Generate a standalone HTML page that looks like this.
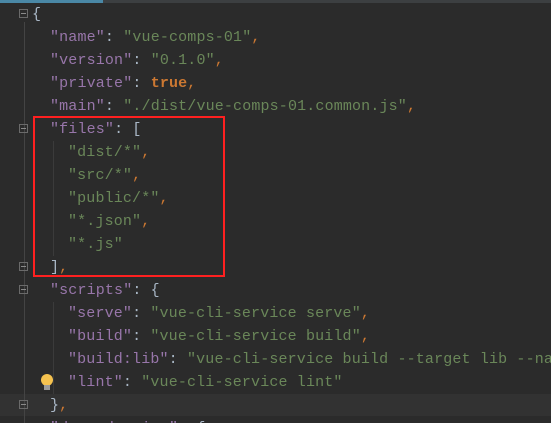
<!DOCTYPE html><html><head><style>
html,body{margin:0;width:551px;height:423px;overflow:hidden}
body{background:#2b2b2b;position:relative;font-family:"Liberation Mono",monospace;font-size:15px;}
#w{position:absolute;left:0;top:0;width:551px;height:423px;overflow:hidden}
.top{position:absolute;left:0;top:0;width:551px;height:3px;background:#3c3f41;}
.top i{position:absolute;left:0;top:0;width:103px;height:3px;background:#4a88a6;}
.hl{position:absolute;left:0;top:394px;width:551px;height:22px;background:#323232;}
.ln{position:absolute;left:0;height:23px;line-height:23px;white-space:pre;color:#a9b7c6;letter-spacing:0.15px}
.k{color:#9876aa}.s{color:#6a8759}.c{color:#cc7832}.b{color:#cc7832;font-weight:bold}
.box{position:absolute;left:33px;top:116px;width:188px;height:157px;border:2px solid #ff2020;}
.fold{position:absolute;left:19px;width:9px;height:9px;border:1px solid #6a6a6a;box-sizing:border-box}
.fold:after{content:"";position:absolute;left:1px;top:3px;width:5px;height:1px;background:#8a8a8a}
.vl{position:absolute;left:24px;width:1px;background:#444}
.gl{position:absolute;width:1px;background:#3b3b3b}
</style></head><body><div id="w">
<div class="top"><i></i></div>
<div class="hl"></div>
<div class="vl" style="top:22px;height:401px"></div>
<div class="fold" style="top:9px"></div>
<div class="fold" style="top:124px"></div>
<div class="fold" style="top:262px"></div>
<div class="fold" style="top:285px"></div>
<div class="fold" style="top:400px"></div>
<div class="gl" style="left:53px;top:141px;height:115px"></div>
<div class="gl" style="left:53px;top:302px;height:92px"></div>
<div class="ln" style="top:3px;left:32px">{</div>
<div class="ln" style="top:26px;left:50px"><span class="k">"name"</span>: <span class="s">"vue-comps-01"</span><span class="c">,</span></div>
<div class="ln" style="top:49px;left:50px"><span class="k">"version"</span>: <span class="s">"0.1.0"</span><span class="c">,</span></div>
<div class="ln" style="top:72px;left:50px"><span class="k">"private"</span>: <span class="b">true</span><span class="c">,</span></div>
<div class="ln" style="top:95px;left:50px"><span class="k">"main"</span>: <span class="s">"./dist/vue-comps-01.common.js"</span><span class="c">,</span></div>
<div class="ln" style="top:118px;left:50px"><span class="k">"files"</span>: [</div>
<div class="ln" style="top:141px;left:68px"><span class="s">"dist/*"</span><span class="c">,</span></div>
<div class="ln" style="top:164px;left:68px"><span class="s">"src/*"</span><span class="c">,</span></div>
<div class="ln" style="top:187px;left:68px"><span class="s">"public/*"</span><span class="c">,</span></div>
<div class="ln" style="top:210px;left:68px"><span class="s">"*.json"</span><span class="c">,</span></div>
<div class="ln" style="top:233px;left:68px"><span class="s">"*.js"</span></div>
<div class="ln" style="top:256px;left:50px">]<span class="c">,</span></div>
<div class="ln" style="top:279px;left:50px"><span class="k">"scripts"</span>: {</div>
<div class="ln" style="top:302px;left:68px"><span class="k">"serve"</span>: <span class="s">"vue-cli-service serve"</span><span class="c">,</span></div>
<div class="ln" style="top:325px;left:68px"><span class="k">"build"</span>: <span class="s">"vue-cli-service build"</span><span class="c">,</span></div>
<div class="ln" style="top:348px;left:68px"><span class="k">"build:lib"</span>: <span class="s">"vue-cli-service build --target lib --nam</span></div>
<div class="ln" style="top:371px;left:68px"><span class="k">"lint"</span>: <span class="s">"vue-cli-service lint"</span></div>
<div class="ln" style="top:394px;left:50px">}<span class="c">,</span></div>
<div class="ln" style="top:417px;left:50px"><span class="k">"dependencies"</span>: {</div>
<svg style="position:absolute;left:40px;top:373px" width="14" height="20"><circle cx="7" cy="7" r="6" fill="#f5c24f"/><rect x="4" y="12" width="6" height="5" fill="#9a9a9a"/></svg>
<div class="box"></div>
</div></body></html>
